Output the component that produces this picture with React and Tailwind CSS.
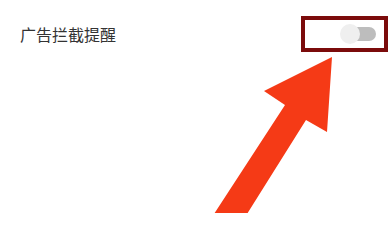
export default function App() {
  return (
    <div className="relative w-[390px] h-[213px] overflow-hidden bg-white" style={{ fontFamily: '"Noto Sans CJK SC", "Noto Sans", sans-serif' }}>
      <div className="flex items-center justify-between pl-[20px] pr-[2px] pt-[16px]">
        <span className="text-[16px] leading-none text-[#333333]">广告拦截提醒</span>
        <div className="flex h-[36px] w-[87px] items-center justify-end border-[4px] border-[#7b0b0b] pr-[8px]">
          <div className="relative h-[20px] w-[36px]">
            <div className="absolute right-0 top-[3px] h-[14px] w-[28px] rounded-full bg-[#bdbdbd]" />
            <div className="absolute left-0 top-0 h-[20px] w-[20px] rounded-full bg-[#efefef]" />
          </div>
        </div>
      </div>

      <svg className="absolute left-0 top-0" width="390" height="213" viewBox="0 0 390 213">
        <polygon
          points="332,57 327,132 306,120 247,214 214,214 285,105 264,91"
          fill="#f53a16"
        />
      </svg>
    </div>
  )
}
